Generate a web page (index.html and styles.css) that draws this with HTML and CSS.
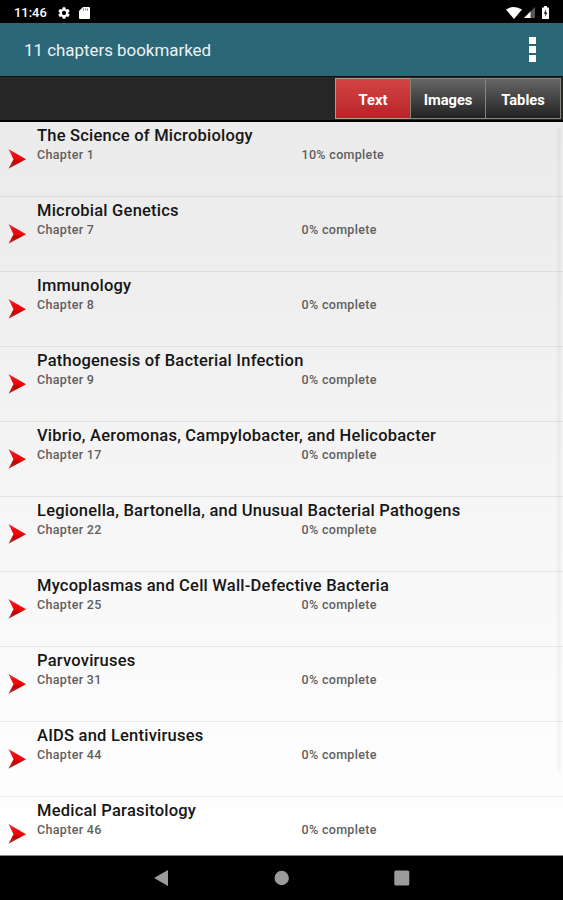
FILE: index.html
```html
<!DOCTYPE html>
<html lang="en">
<head>
<meta charset="utf-8">
<title>Bookmarks</title>
<link rel="stylesheet" href="styles.css">
</head>
<body>
<svg class="defs" width="0" height="0" aria-hidden="true">
  <defs>
    <linearGradient id="red" x1="0" y1="0" x2="0" y2="1"><stop offset="0" stop-color="#e04048"/><stop offset=".3" stop-color="#f00b12"/><stop offset=".5" stop-color="#ee0508"/><stop offset=".65" stop-color="#c40000"/><stop offset="1" stop-color="#a83c3c"/></linearGradient>
    <symbol id="arrow" viewBox="0 0 18 20"><path d="M.5 0 18 10.200.5 19.800 5.500 10.200Z" fill="url(#red)"/></symbol>
  </defs>
</svg>
<div class="screen">
  <header class="status">
    <span class="clock">11:46</span>
    <svg class="gear" viewBox="2 2 20 20"><path fill="#fff" d="M19.14 12.940c.04-.3.06-.61.06-.94s-.02-.64-.07-.94l2.030-1.580a.5.5 0 0 0 .12-.61l-1.920-3.320a.5.5 0 0 0-.59-.22l-2.390.96a7 7 0 0 0-1.620-.94l-.36-2.540A.48.48 0 0 0 13.920 2.400h-3.840a.47.47 0 0 0-.47.410l-.36 2.540c-.59.24-1.130.57-1.620.94l-2.390-.96a.48.48 0 0 0-.59.22L2.740 8.870a.48.48 0 0 0 .12.610l2.030 1.580c-.05.3-.09.63-.09.94s.02.64.07.94l-2.030 1.580a.5.5 0 0 0-.12.610l1.920 3.320c.12.22.37.290.59.220l2.390-.96c.5.380 1.030.7 1.620.94l.36 2.540c.05.24.24.410.48.410h3.840c.24 0 .44-.17.47-.41l.36-2.540a7 7 0 0 0 1.620-.94l2.390.96c.22.080.47 0 .59-.22l1.920-3.320a.48.48 0 0 0-.12-.61ZM12 15.600a3.600 3.600 0 1 1 0-7.200 3.600 3.600 0 0 1 0 7.200Z"/></svg>
    <svg class="card" viewBox="0 0 11 12"><path fill="#fff" d="M4 0h6a1 1 0 0 1 1 1v10a1 1 0 0 1-1 1H1a1 1 0 0 1-1-1V4Z"/><path stroke="#777" d="M4.500 1.500v2M6.500 1.500v2M8.500 1.500v2"/></svg>
    <span class="grow"></span>
    <svg class="wifi" viewBox="0 0 16 12"><path fill="#fff" d="M0 2.500Q8-2.500 16 2.500L8 12Z"/></svg>
    <svg class="signal" viewBox="0 0 11 11"><path fill="#555" d="M11 0v11H0Z"/><path fill="#fff" d="M6.500 4.500V11H0Z"/></svg>
    <svg class="battery" viewBox="0 0 7 13"><path fill="#fff" d="M2 0h3v1.500h2V13H0V1.500h2Z"/><path fill="#222" d="M4 3.500 1.700 7.800h1.500v3L5.400 6.500H4Z"/></svg>
  </header>
  <div class="appbar">
    <h1>11 chapters bookmarked</h1>
    <div class="more"><i></i><i></i><i></i></div>
  </div>
  <nav class="tabs">
    <button class="tab active">Text</button>
    <button class="tab">Images</button>
    <button class="tab">Tables</button>
  </nav>
  <main class="list">
    <article class="row"><svg class="arrow"><use href="#arrow"/></svg><div class="info"><h2>The Science of Microbiology</h2><p><span>Chapter 1</span><span>10% complete</span></p></div></article>
    <article class="row"><svg class="arrow"><use href="#arrow"/></svg><div class="info"><h2>Microbial Genetics</h2><p><span>Chapter 7</span><span>0% complete</span></p></div></article>
    <article class="row"><svg class="arrow"><use href="#arrow"/></svg><div class="info"><h2>Immunology</h2><p><span>Chapter 8</span><span>0% complete</span></p></div></article>
    <article class="row"><svg class="arrow"><use href="#arrow"/></svg><div class="info"><h2>Pathogenesis of Bacterial Infection</h2><p><span>Chapter 9</span><span>0% complete</span></p></div></article>
    <article class="row"><svg class="arrow"><use href="#arrow"/></svg><div class="info"><h2>Vibrio, Aeromonas, Campylobacter, and Helicobacter</h2><p><span>Chapter 17</span><span>0% complete</span></p></div></article>
    <article class="row"><svg class="arrow"><use href="#arrow"/></svg><div class="info"><h2>Legionella, Bartonella, and Unusual Bacterial Pathogens</h2><p><span>Chapter 22</span><span>0% complete</span></p></div></article>
    <article class="row"><svg class="arrow"><use href="#arrow"/></svg><div class="info"><h2>Mycoplasmas and Cell Wall-Defective Bacteria</h2><p><span>Chapter 25</span><span>0% complete</span></p></div></article>
    <article class="row"><svg class="arrow"><use href="#arrow"/></svg><div class="info"><h2>Parvoviruses</h2><p><span>Chapter 31</span><span>0% complete</span></p></div></article>
    <article class="row"><svg class="arrow"><use href="#arrow"/></svg><div class="info"><h2>AIDS and Lentiviruses</h2><p><span>Chapter 44</span><span>0% complete</span></p></div></article>
    <article class="row"><svg class="arrow"><use href="#arrow"/></svg><div class="info"><h2>Medical Parasitology</h2><p><span>Chapter 46</span><span>0% complete</span></p></div></article>
    <div class="scrollbar"></div>
  </main>
  <footer class="navbar">
    <svg viewBox="0 0 16 16"><path fill="#9b9b9b" d="M14 0v16L0 8Z"/></svg>
    <svg viewBox="0 0 16 16"><circle fill="#9b9b9b" cx="7.700" cy="8" r="7.200"/></svg>
    <svg viewBox="0 0 16 16"><rect fill="#9b9b9b" x=".3" y=".5" width="15" height="15" rx="1.500"/></svg>
  </footer>
</div>
</body>
</html>
```
FILE: styles.css
```css
* { box-sizing: border-box; }
body { margin: 0; font-family: Roboto, sans-serif; background: #000; }
h1, h2, p { margin: 0; }
.defs { position: absolute; }
.screen { width: 563px; height: 900px; display: flex; flex-direction: column; overflow: hidden; }

.status { height: 23px; flex: none; background: #000; color: #fff; display: flex; align-items: center; padding: 2px 14px 0 14px; }
.clock { font-size: 12.9px; font-weight: 500; width: 44px; line-height: 20px; }
.gear { width: 12px; height: 12px; margin-right: 9px; }
.card { width: 11px; height: 12px; }
.grow { flex: 1; }
.wifi { width: 16px; height: 12px; margin-right: 2px; }
.signal { width: 11px; height: 11px; margin-right: 7px; }
.battery { width: 7px; height: 13px; }

.appbar { height: 53px; flex: none; background: #2b6777; display: flex; align-items: center; justify-content: space-between; padding: 0 27px 0 24px; }
.appbar h1 { color: #edf2f4; font-size: 16.9px; font-weight: 400; line-height: 24px; }
.more { display: flex; flex-direction: column; gap: 2px; }
.more i { width: 7px; height: 7px; background: #fff; }

.tabs { height: 46px; flex: none; background: #262626; border-top: 1px solid #101010; border-bottom: 2px solid #050505; display: flex; justify-content: flex-end; padding: 1px 2px 1px 0; }
.tab { width: 76px; height: 41px; margin-left: -1px; padding: 1px 0 0; border: 1px solid #85857a; background: linear-gradient(#666, #222); color: #fff; font: 700 14.7px/40px Roboto, sans-serif; text-align: center; }
.tab.active { background: linear-gradient(#d34545, #b82428); border-color: #b09a88; }

.list { flex: none; height: 734px; overflow: hidden; position: relative; background: linear-gradient(#ebebeb, #eee 20%, #f5f5f5 50%, #fdfdfd 87%, #fff); border-bottom: 1px solid #888; }
.row { height: 75px; border-bottom: 1px solid rgba(0, 0, 0, .07); display: flex; padding-left: 8px; }
.arrow { width: 18px; height: 20px; margin: 27px 11px 0 0; flex: none; }
.info { flex: 1; padding-top: 3px; }
.info h2 { font-size: 16.5px; font-weight: 500; line-height: 21px; color: #161616; white-space: nowrap; letter-spacing: .22px; }
.info p { display: grid; grid-template-columns: 264.5px 1fr; font-size: 12.5px; font-weight: 500; line-height: 17px; color: #606060; letter-spacing: .32px; }
.scrollbar { position: absolute; right: 2px; top: 6px; width: 4px; height: 644px; background: rgba(0, 0, 0, .03); }

.navbar { flex: 1; background: #000; display: flex; justify-content: center; gap: 104px; align-items: center; }
.navbar svg { width: 16px; height: 16px; }
```
